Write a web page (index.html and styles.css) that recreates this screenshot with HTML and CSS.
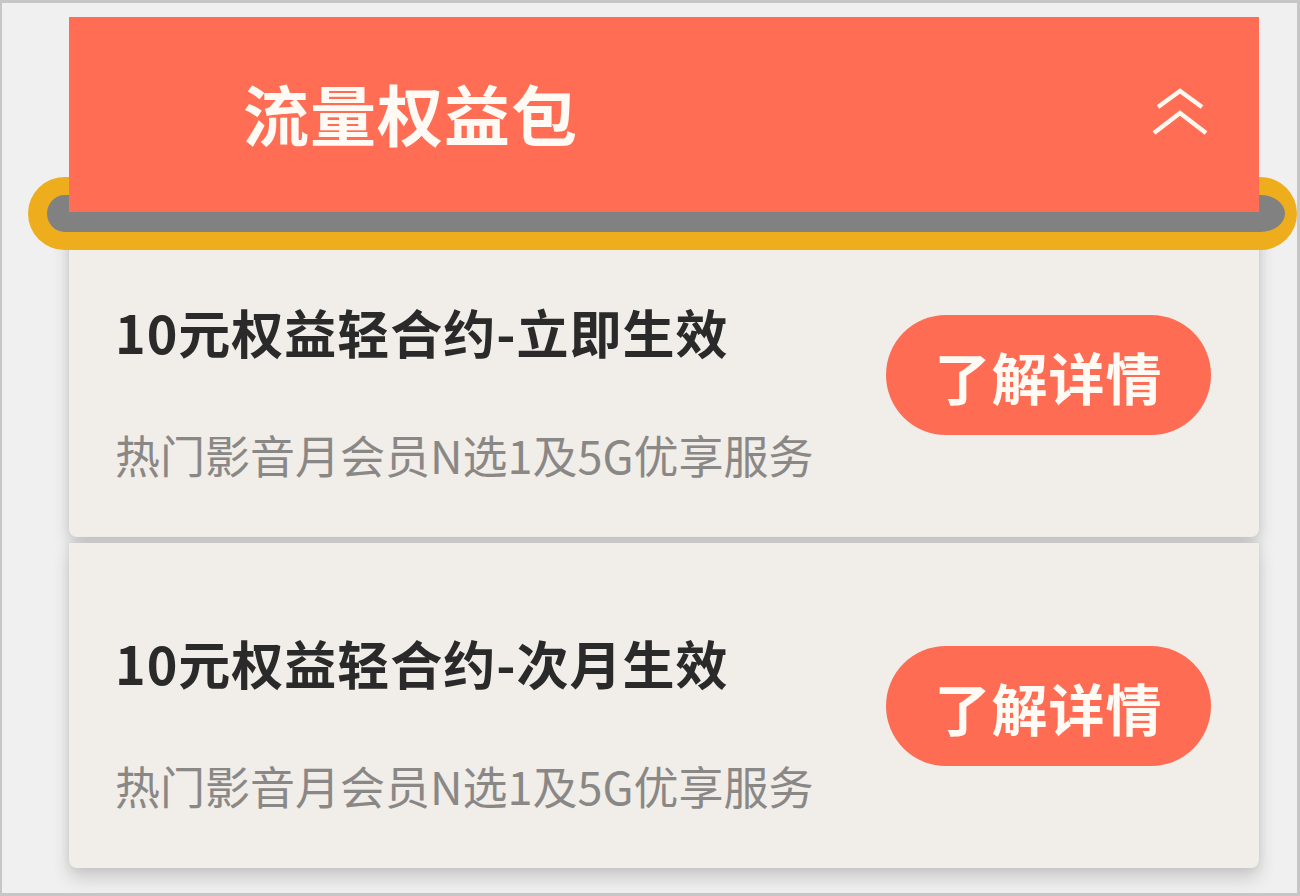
FILE: index.html
```html
<!DOCTYPE html>
<html lang="zh-CN">

  <head>
    <meta charset="UTF-8">
    <meta name="viewport" content="width=device-width, initial-scale=1.0">
    <title>流量权益包</title>
    <link rel="stylesheet" href="styles.css">
  </head>

  <body>
    <div class="frame">
      <div class="panel">
        <div class="ribbon"></div>
        <div class="panel-head">
          <h1>流量权益包</h1>
          <svg class="fold" width="56" height="48" viewBox="0 0 56 48">
            <path d="M6 19 L28 3 L50 19" />
            <path d="M2 45 L28 25 L54 45" />
          </svg>
        </div>

        <div class="offers">
          <div class="offer">
            <h3>10元权益轻合约-立即生效</h3>
            <button>了解详情</button>
            <p>热门影音月会员N选1及5G优享服务</p>
          </div>
          <div class="offer">
            <h3>10元权益轻合约-次月生效</h3>
            <button>了解详情</button>
            <p>热门影音月会员N选1及5G优享服务</p>
          </div>
        </div>
      </div>
    </div>
  </body>

</html>
```

FILE: styles.css
```css
body {
  margin: 0;
  font-family: "Noto Sans CJK SC", "Noto Sans", sans-serif;
}

.frame {
  width: 1300px;
  height: 896px;
  box-sizing: border-box;
  border: 3px solid #c6c6c6;
  border-left-width: 2px;
  background-color: #f0f0f0;
  padding: 14px 0 0 67px;
  overflow: hidden;
}

.panel {
  position: relative;
  width: 1190px;
}

/* yellow rail the header sits on */
.ribbon {
  position: absolute;
  left: -41px;
  top: 160px;
  width: 1269px;
  height: 73px;
  box-sizing: border-box;
  border: 18px solid #eead1d;
  border-right-width: 12px;
  border-left-width: 19px;
  border-radius: 40px;
  background-color: #818181;
  z-index: 1;
}

.panel-head {
  position: relative;
  z-index: 2;
  height: 195px;
  display: flex;
  align-items: center;
  justify-content: space-between;
  padding: 0 51px 0 174px;
  background-color: #ff6d55;
}

.panel-head h1 {
  margin: 0;
  font-size: 66px;
  line-height: 1;
  font-weight: 700;
  color: #fffaf4;
  letter-spacing: 1px;
  margin-top: -6px;
}

.fold {
  margin-top: -6px;
}

.fold path {
  fill: none;
  stroke: #fff8f0;
  stroke-width: 4.5;
}

.offers {
  display: flex;
  flex-direction: column;
  gap: 6px;
}

.offer {
  height: 325px;
  box-sizing: border-box;
  padding: 94px 48px 0 46px;
  background-color: #f1ede8;
  border-radius: 0 0 8px 8px;
  box-shadow: 0 10px 18px rgba(0, 0, 0, 0.16), 0 0 8px rgba(0, 0, 0, 0.08);
  display: grid;
  grid-template-columns: 1fr auto;
  grid-template-rows: auto auto;
  align-content: start;
}

.offer h3 {
  margin: 0;
  font-size: 52px;
  line-height: 52px;
  font-weight: 700;
  color: #2a2a2a;
  letter-spacing: 1px;
}

.offer p {
  grid-column: 1;
  grid-row: 2;
  margin: 74px 0 0;
  font-size: 45px;
  line-height: 45px;
  font-weight: 400;
  color: #8a8886;
}

.offer button {
  grid-column: 2;
  grid-row: 1 / 3;
  align-self: start;
  margin-top: 9px;
  width: 325px;
  height: 120px;
  border: none;
  border-radius: 60px;
  background-color: #fd6c53;
  color: #fffaf4;
  font-family: inherit;
  font-size: 56px;
  font-weight: 700;
  padding: 0;
  letter-spacing: 1px;
  cursor: pointer;
}
```
